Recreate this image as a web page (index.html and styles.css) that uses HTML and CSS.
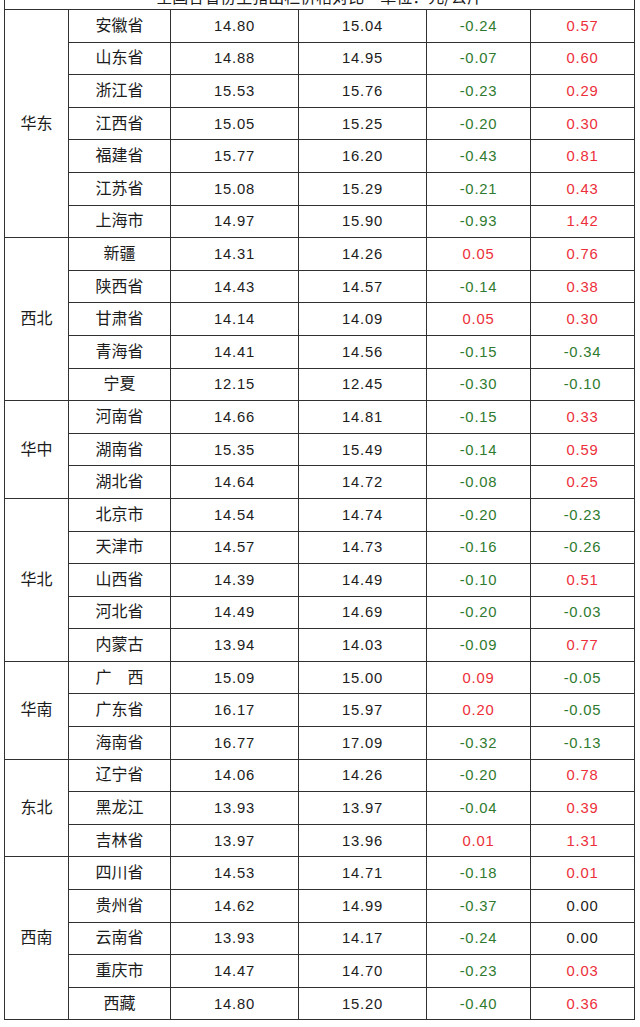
FILE: index.html
```html
<!DOCTYPE html>
<html lang="zh-CN">
<head>
<meta charset="utf-8">
<title>生猪价格</title>
<link rel="stylesheet" href="styles.css">
</head>
<body>
<table class="price-table">
  <colgroup>
    <col class="c-region"><col class="c-prov"><col class="c-num"><col class="c-num"><col class="c-chg"><col class="c-chg">
  </colgroup>
  <thead>
    <tr class="head-row"><th colspan="6">全国各省份生猪出栏价格对比　单位：元/公斤</th></tr>
  </thead>
  <tbody>
    <tr><td class="region" rowspan="7">华东</td><td>安徽省</td><td class="n">14.80</td><td class="n">15.04</td><td class="n dn">-0.24</td><td class="n up">0.57</td></tr>
    <tr><td>山东省</td><td class="n">14.88</td><td class="n">14.95</td><td class="n dn">-0.07</td><td class="n up">0.60</td></tr>
    <tr><td>浙江省</td><td class="n">15.53</td><td class="n">15.76</td><td class="n dn">-0.23</td><td class="n up">0.29</td></tr>
    <tr><td>江西省</td><td class="n">15.05</td><td class="n">15.25</td><td class="n dn">-0.20</td><td class="n up">0.30</td></tr>
    <tr><td>福建省</td><td class="n">15.77</td><td class="n">16.20</td><td class="n dn">-0.43</td><td class="n up">0.81</td></tr>
    <tr><td>江苏省</td><td class="n">15.08</td><td class="n">15.29</td><td class="n dn">-0.21</td><td class="n up">0.43</td></tr>
    <tr><td>上海市</td><td class="n">14.97</td><td class="n">15.90</td><td class="n dn">-0.93</td><td class="n up">1.42</td></tr>

    <tr><td class="region" rowspan="5">西北</td><td>新疆</td><td class="n">14.31</td><td class="n">14.26</td><td class="n up">0.05</td><td class="n up">0.76</td></tr>
    <tr><td>陕西省</td><td class="n">14.43</td><td class="n">14.57</td><td class="n dn">-0.14</td><td class="n up">0.38</td></tr>
    <tr><td>甘肃省</td><td class="n">14.14</td><td class="n">14.09</td><td class="n up">0.05</td><td class="n up">0.30</td></tr>
    <tr><td>青海省</td><td class="n">14.41</td><td class="n">14.56</td><td class="n dn">-0.15</td><td class="n dn">-0.34</td></tr>
    <tr><td>宁夏</td><td class="n">12.15</td><td class="n">12.45</td><td class="n dn">-0.30</td><td class="n dn">-0.10</td></tr>

    <tr><td class="region" rowspan="3">华中</td><td>河南省</td><td class="n">14.66</td><td class="n">14.81</td><td class="n dn">-0.15</td><td class="n up">0.33</td></tr>
    <tr><td>湖南省</td><td class="n">15.35</td><td class="n">15.49</td><td class="n dn">-0.14</td><td class="n up">0.59</td></tr>
    <tr><td>湖北省</td><td class="n">14.64</td><td class="n">14.72</td><td class="n dn">-0.08</td><td class="n up">0.25</td></tr>

    <tr><td class="region" rowspan="5">华北</td><td>北京市</td><td class="n">14.54</td><td class="n">14.74</td><td class="n dn">-0.20</td><td class="n dn">-0.23</td></tr>
    <tr><td>天津市</td><td class="n">14.57</td><td class="n">14.73</td><td class="n dn">-0.16</td><td class="n dn">-0.26</td></tr>
    <tr><td>山西省</td><td class="n">14.39</td><td class="n">14.49</td><td class="n dn">-0.10</td><td class="n up">0.51</td></tr>
    <tr><td>河北省</td><td class="n">14.49</td><td class="n">14.69</td><td class="n dn">-0.20</td><td class="n dn">-0.03</td></tr>
    <tr><td>内蒙古</td><td class="n">13.94</td><td class="n">14.03</td><td class="n dn">-0.09</td><td class="n up">0.77</td></tr>

    <tr><td class="region" rowspan="3">华南</td><td>广　西</td><td class="n">15.09</td><td class="n">15.00</td><td class="n up">0.09</td><td class="n dn">-0.05</td></tr>
    <tr><td>广东省</td><td class="n">16.17</td><td class="n">15.97</td><td class="n up">0.20</td><td class="n dn">-0.05</td></tr>
    <tr><td>海南省</td><td class="n">16.77</td><td class="n">17.09</td><td class="n dn">-0.32</td><td class="n dn">-0.13</td></tr>

    <tr><td class="region" rowspan="3">东北</td><td>辽宁省</td><td class="n">14.06</td><td class="n">14.26</td><td class="n dn">-0.20</td><td class="n up">0.78</td></tr>
    <tr><td>黑龙江</td><td class="n">13.93</td><td class="n">13.97</td><td class="n dn">-0.04</td><td class="n up">0.39</td></tr>
    <tr><td>吉林省</td><td class="n">13.97</td><td class="n">13.96</td><td class="n up">0.01</td><td class="n up">1.31</td></tr>

    <tr><td class="region" rowspan="5">西南</td><td>四川省</td><td class="n">14.53</td><td class="n">14.71</td><td class="n dn">-0.18</td><td class="n up">0.01</td></tr>
    <tr><td>贵州省</td><td class="n">14.62</td><td class="n">14.99</td><td class="n dn">-0.37</td><td class="n">0.00</td></tr>
    <tr><td>云南省</td><td class="n">13.93</td><td class="n">14.17</td><td class="n dn">-0.24</td><td class="n">0.00</td></tr>
    <tr><td>重庆市</td><td class="n">14.47</td><td class="n">14.70</td><td class="n dn">-0.23</td><td class="n up">0.03</td></tr>
    <tr><td>西藏</td><td class="n">14.80</td><td class="n">15.20</td><td class="n dn">-0.40</td><td class="n up">0.36</td></tr>
  </tbody>
</table>
</body>
</html>
```

FILE: styles.css
```css
html, body {
  margin: 0;
  padding: 0;
  background: #ffffff;
}

body {
  overflow: hidden;
}

.price-table {
  border-collapse: collapse;
  table-layout: fixed;
  width: 631px;
  margin: -25px 0 0 4px;
  font-family: "Liberation Sans", "Noto Sans CJK SC", sans-serif;
  font-size: 16px;
  color: #1c1c1c;
}

.c-region { width: 64px; }
.c-prov { width: 102px; }
.c-num { width: 128px; }
.c-chg { width: 104px; }

.price-table th,
.price-table td {
  border: 1px solid #303030;
  text-align: center;
  vertical-align: middle;
  padding: 0;
  font-weight: normal;
  line-height: 20px;
}

.price-table .head-row th {
  height: 27px;
  vertical-align: bottom;
  padding: 0 0 6px;
  line-height: 14px;
  font-size: 16px;
  font-family: "Noto Sans CJK SC", sans-serif;
}

.price-table tbody td {
  height: 31.6px;
}

.region {
  font-size: 16px;
}

.n {
  font-size: 14.8px;
  letter-spacing: 0.8px;
}

.up { color: #ec2f3b; }
.dn { color: #2f7a30; }
```
